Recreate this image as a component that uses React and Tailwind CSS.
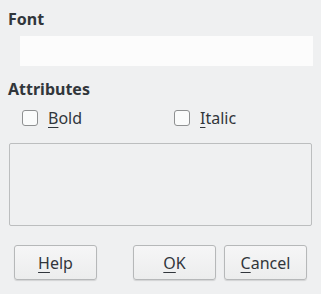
export default function App() {
  const font = { fontFamily: '"Noto Sans", "DejaVu Sans", sans-serif' };
  return (
    <div className="w-[321px] h-[294px] bg-[#eff0f1] text-[#31363b] flex flex-col" style={font}>
      <div className="pl-[8px] pt-[8px] text-[16px] font-bold leading-[22px]">Font</div>
      <div className="ml-[20px] mt-[6px] w-[293px] h-[30px] bg-[#fcfcfc]"></div>
      <div className="pl-[8px] mt-[12px] text-[16px] font-bold leading-[22px]">Attributes</div>
      <div className="flex items-center mt-[7px] h-[22px]">
        <label className="flex items-center ml-[22px] w-[152px]">
          <span className="w-[16px] h-[16px] rounded-[3px] border border-[#8e9091] bg-[#fafbfb]"></span>
          <span className="ml-[10px] text-[16px]"><u className="underline-offset-[3px]">B</u>old</span>
        </label>
        <label className="flex items-center">
          <span className="w-[16px] h-[16px] rounded-[3px] border border-[#8e9091] bg-[#fafbfb]"></span>
          <span className="ml-[10px] text-[16px]"><u className="underline-offset-[3px]">I</u>talic</span>
        </label>
      </div>
      <div className="ml-[9px] mt-[14px] w-[303px] h-[83px] border border-[#bcbebf] rounded-[2px]"></div>
      <div className="flex mt-[19px] h-[35px]">
        <button className="ml-[14px] w-[83px] h-[35px] rounded-[3px] border border-[#b6b8b9] bg-gradient-to-b from-[#f6f6f7] to-[#eceded] shadow-[0_1px_1px_rgba(0,0,0,0.12)] text-[16px]">
          <u className="underline-offset-[3px]">H</u>elp
        </button>
        <button className="ml-[36px] w-[83px] h-[35px] rounded-[3px] border border-[#b6b8b9] bg-gradient-to-b from-[#f6f6f7] to-[#eceded] shadow-[0_1px_1px_rgba(0,0,0,0.12)] text-[16px]">
          <u className="underline-offset-[3px]">O</u>K
        </button>
        <button className="ml-[8px] w-[83px] h-[35px] rounded-[3px] border border-[#b6b8b9] bg-gradient-to-b from-[#f6f6f7] to-[#eceded] shadow-[0_1px_1px_rgba(0,0,0,0.12)] text-[16px]">
          <u className="underline-offset-[3px]">C</u>ancel
        </button>
      </div>
    </div>
  );
}
